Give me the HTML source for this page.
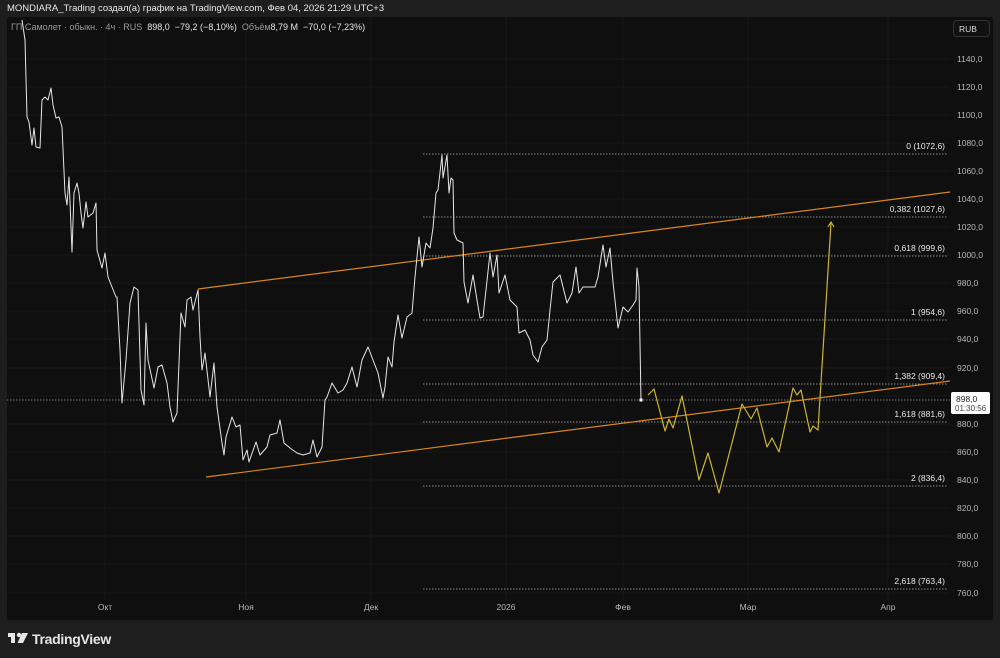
<!DOCTYPE html>
<html><head><meta charset="utf-8"><style>
html,body{margin:0;padding:0;background:#1e1e1e;width:1000px;height:658px;overflow:hidden;font-family:"Liberation Sans","DejaVu Sans",sans-serif}
.hdr{position:absolute;left:7px;top:3px;color:#e8e8e8;font-size:9.5px;white-space:nowrap}
.panel{position:absolute;left:7px;top:17px;width:986px;height:603px;background:#0f0f0f;border-radius:2px}
.leg{position:absolute;left:11px;top:22px;font-size:9px;color:#9a9a9a;white-space:nowrap}
.leg b{color:#e6e6e6;font-weight:normal}
.rub{position:absolute;left:953px;top:20px;width:37px;height:17px;border:1px solid #333;border-radius:4px;background:#111;color:#ddd;font-size:8.5px;line-height:17px;box-sizing:border-box;padding-left:5px}
.logo{position:absolute;color:#e6e6e6;font-size:14px;font-weight:bold;letter-spacing:-0.3px}
</style></head><body>
<div class="hdr">MONDIARA_Trading создал(а) график на TradingView.com, Фев 04, 2026 21:29 UTC+3</div>
<div class="panel"></div>
<svg width="1000" height="658" style="position:absolute;left:0;top:0" font-family="Liberation Sans, sans-serif">
<g stroke="#171717" stroke-width="1">
<line x1="105" y1="17" x2="105" y2="600"/><line x1="246" y1="17" x2="246" y2="600"/><line x1="371" y1="17" x2="371" y2="600"/><line x1="506" y1="17" x2="506" y2="600"/><line x1="623" y1="17" x2="623" y2="600"/><line x1="748" y1="17" x2="748" y2="600"/><line x1="888" y1="17" x2="888" y2="600"/>
<line x1="7" y1="59" x2="950" y2="59"/><line x1="7" y1="87" x2="950" y2="87"/><line x1="7" y1="115" x2="950" y2="115"/><line x1="7" y1="143" x2="950" y2="143"/><line x1="7" y1="171" x2="950" y2="171"/><line x1="7" y1="199" x2="950" y2="199"/><line x1="7" y1="227" x2="950" y2="227"/><line x1="7" y1="255" x2="950" y2="255"/><line x1="7" y1="283" x2="950" y2="283"/><line x1="7" y1="311" x2="950" y2="311"/><line x1="7" y1="339" x2="950" y2="339"/><line x1="7" y1="368" x2="950" y2="368"/><line x1="7" y1="396" x2="950" y2="396"/><line x1="7" y1="424" x2="950" y2="424"/><line x1="7" y1="452" x2="950" y2="452"/><line x1="7" y1="480" x2="950" y2="480"/><line x1="7" y1="508" x2="950" y2="508"/><line x1="7" y1="536" x2="950" y2="536"/><line x1="7" y1="564" x2="950" y2="564"/><line x1="7" y1="593" x2="950" y2="593"/>
</g>
<g stroke="#8a8a8a" stroke-width="1" stroke-dasharray="1.5,1.5">
<line x1="423" y1="154" x2="948" y2="154"/><line x1="423" y1="217" x2="948" y2="217"/><line x1="423" y1="256" x2="948" y2="256"/><line x1="423" y1="320" x2="948" y2="320"/><line x1="423" y1="384" x2="948" y2="384"/><line x1="423" y1="422" x2="948" y2="422"/><line x1="423" y1="486" x2="948" y2="486"/><line x1="423" y1="589" x2="948" y2="589"/>
<line x1="7" y1="400" x2="950" y2="400" stroke="#777"/>
</g>
<g font-size="8.5" fill="#e8e8e8" text-anchor="end">
<text x="945" y="149">0 (1072,6)</text><text x="945" y="212">0,382 (1027,6)</text><text x="945" y="251">0,618 (999,6)</text><text x="945" y="315">1 (954,6)</text><text x="945" y="379">1,382 (909,4)</text><text x="945" y="417">1,618 (881,6)</text><text x="945" y="481">2 (836,4)</text><text x="945" y="584">2,618 (763,4)</text>
</g>
<g stroke="#d9851c" stroke-width="1.2"><line x1="198" y1="289" x2="950" y2="192"/><line x1="206" y1="477" x2="950" y2="381"/></g>
<polyline fill="none" stroke="#e6e6e6" stroke-width="1" stroke-linejoin="round" points="22,20 25,40 27,117 29,122 32,145 34,128 36,147 40,148 42,100 45,97 48,100 51,88 53,105 56,118 59,117 62,127 65,193 67,205 69,177 72,252 74,193 77,183 79,193 81,213 83,228 86,202 88,217 93,213 96,203 97,250 102,268 105,253 108,277 112,287 116,297 117,297 120,350 122,403 126,360 130,303 134,287 138,290 141,390 144,405 146,323 148,360 154,388 158,367 162,365 167,383 170,407 173,422 177,413 181,313 185,327 187,300 191,297 193,310 198,290 200,337 202,370 205,353 210,397 214,363 217,407 222,443 224,455 226,437 232,417 236,427 240,425 243,460 247,450 249,462 256,442 260,455 267,447 270,435 277,433 280,420 284,443 290,448 297,453 303,455 310,453 313,440 317,457 322,447 325,400 327,397 332,383 338,393 343,390 347,383 352,367 357,387 362,360 368,347 373,360 378,373 383,398 385,387 388,357 392,367 394,342 398,315 402,338 407,317 412,313 415,277 419,237 422,267 426,243 430,248 433,228 436,193 438,190 442,155 443,178 447,155 449,193 451,178 453,180 454,233 457,240 463,243 464,282 468,303 473,275 477,300 480,318 483,317 486,290 490,253 493,277 497,255 499,293 505,275 510,300 517,307 519,333 525,330 530,340 533,355 538,362 542,347 547,340 550,310 553,282 560,275 567,303 572,293 576,267 579,293 583,287 590,287 595,287 598,277 603,245 606,267 610,248 613,282 618,328 623,307 628,312 633,305 636,300 637,268 639,287 641,400"/>
<rect x="639.5" y="398.5" width="3" height="3" fill="#fff"/>
<polyline fill="none" stroke="#cdb52a" stroke-width="1.2" stroke-linejoin="round" points="648,395 654,389 665,431 669,419 673,428 682,396 699,480 708,453 719,493 742,404 751,419 757,408 767,447 772,438 779,452 793,388 797,395 801,390 810,432 813,426 818,430 831,223"/>
<polyline fill="none" stroke="#cdb52a" stroke-width="1.2" points="828,227 831,222 834,227"/>
<g font-size="8.5" fill="#b8b8b8">
<text x="957" y="62">1140,0</text><text x="957" y="90">1120,0</text><text x="957" y="118">1100,0</text><text x="957" y="146">1080,0</text><text x="957" y="174">1060,0</text><text x="957" y="202">1040,0</text><text x="957" y="230">1020,0</text><text x="957" y="258">1000,0</text><text x="957" y="286">980,0</text><text x="957" y="314">960,0</text><text x="957" y="342">940,0</text><text x="957" y="371">920,0</text><text x="957" y="427">880,0</text><text x="957" y="455">860,0</text><text x="957" y="483">840,0</text><text x="957" y="511">820,0</text><text x="957" y="539">800,0</text><text x="957" y="567">780,0</text><text x="957" y="596">760,0</text>
</g>
<rect x="951" y="392" width="39" height="22" rx="2" fill="#fff"/>
<text x="956" y="402" font-size="8.5" fill="#222">898,0</text>
<text x="955" y="411" font-size="8" fill="#444">01:30:56</text>
<g font-size="8.5" fill="#b8b8b8" text-anchor="middle">
<text x="105" y="610">Окт</text><text x="246" y="610">Ноя</text><text x="371" y="610">Дек</text><text x="506" y="610">2026</text><text x="623" y="610">Фев</text><text x="748" y="610">Мар</text><text x="888" y="610">Апр</text>
</g>
<g fill="#e6e6e6"><rect x="8" y="633" width="7" height="4"/><rect x="11" y="633" width="4" height="10"/><circle cx="19" cy="635" r="2.2"/><polygon points="22,633 28,633 23,643 17.5,643"/></g>
</svg>
<div class="leg">ГП Самолет · обыкн. · 4ч · RUS &nbsp;<b>898,0 &nbsp;−79,2 (−8,10%)</b> &nbsp;Объём<b>8,79 M &nbsp;−70,0 (−7,23%)</b></div>
<div class="rub">RUB</div>
<div class="logo" style="left:32px;top:631px">TradingView</div>
</body></html>
